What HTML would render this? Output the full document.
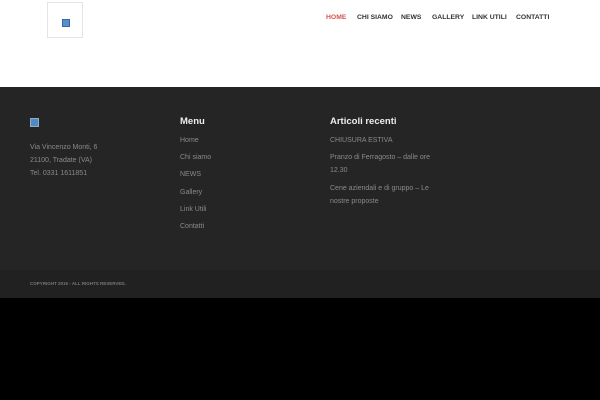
<!DOCTYPE html>
<html><head><style>
body{margin:0;width:600px;height:400px;background:#000;font-family:"Liberation Sans",sans-serif;overflow:hidden;position:relative}
.hdr{position:absolute;left:0;top:0;width:600px;height:87px;background:#fff}
.logo{position:absolute;left:47px;top:2px;width:34px;height:34px;border:1px solid #e4e4e4;background:#fff}
.logo i{position:absolute;left:14px;top:16px;width:6px;height:6px;background:#5a8fc8;border:1px solid #36a}
.ft{position:absolute;left:0;top:87px;width:600px;height:183px;background:#252525}
.bb{position:absolute;left:0;top:270px;width:600px;height:28px;background:#212121}
.t{position:absolute;color:#8a8a8a;font-size:7px;white-space:nowrap}
.h{position:absolute;color:#eee;font-size:9.5px;font-weight:bold}
.fi{position:absolute;left:30px;top:118px;width:7px;height:7px;background:#4b8bc8;border:1px solid #9ab}
</style></head><body>
<div class="hdr"><div class="logo"><i></i></div></div>
<div style="position:absolute;top:14px;left:0;font-size:6.8px;font-weight:bold;color:#333">
<span style="position:absolute;left:326px;color:#d9534f">HOME</span>
<span style="position:absolute;left:357px;white-space:nowrap">CHI SIAMO</span>
<span style="position:absolute;left:401px">NEWS</span>
<span style="position:absolute;left:432px">GALLERY</span>
<span style="position:absolute;left:472px;white-space:nowrap">LINK UTILI</span>
<span style="position:absolute;left:516px">CONTATTI</span>
</div>
<div class="ft"></div><div class="bb"></div>
<div class="fi"></div>
<div class="t" style="left:30px;top:144px">Via Vincenzo Monti, 6</div>
<div class="t" style="left:30px;top:157px">21100, Tradate (VA)</div>
<div class="t" style="left:30px;top:170px">Tel. 0331 1611851</div>
<div class="h" style="left:180px;top:116px">Menu</div>
<div class="t" style="left:180px;top:137px">Home</div>
<div class="t" style="left:180px;top:154px">Chi siamo</div>
<div class="t" style="left:180px;top:171px">NEWS</div>
<div class="t" style="left:180px;top:189px">Gallery</div>
<div class="t" style="left:180px;top:206px">Link Utili</div>
<div class="t" style="left:180px;top:223px">Contatti</div>
<div class="h" style="left:330px;top:116px">Articoli recenti</div>
<div class="t" style="left:330px;top:137px">CHIUSURA ESTIVA</div>
<div class="t" style="left:330px;top:154px">Pranzo di Ferragosto – dalle ore</div>
<div class="t" style="left:330px;top:167px">12.30</div>
<div class="t" style="left:330px;top:185px">Cene aziendali e di gruppo – Le</div>
<div class="t" style="left:330px;top:198px">nostre proposte</div>
<div class="t" style="left:30px;top:281px;font-size:4.5px;font-weight:bold;color:#777">COPYRIGHT 2015 - ALL RIGHTS RESERVED.</div>
</body></html>
